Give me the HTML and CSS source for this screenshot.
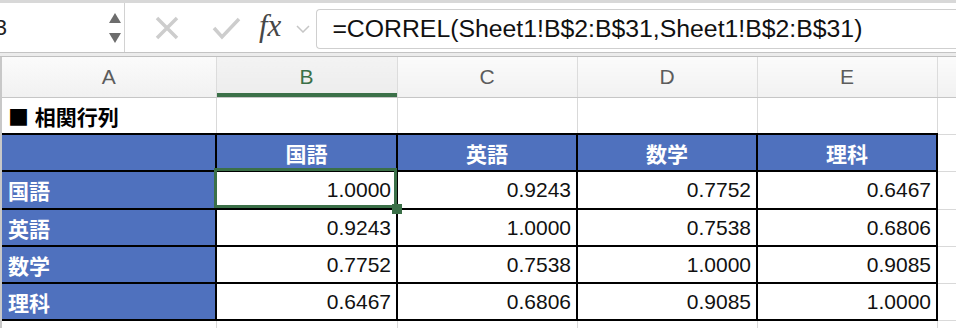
FILE: index.html
```html
<!DOCTYPE html>
<html lang="ja">
<head>
    <meta charset="UTF-8">
    <meta name="viewport" content="width=device-width, initial-scale=1.0">
    <title>相関行列</title>
    <link rel="stylesheet" href="styles.css">
</head>
<body>
    <div class="toolbar">
        <div class="namebox">
            <span class="namebox-text">B3</span>
            <div class="spinner">
                <span class="tri tri-up"></span>
                <span class="tri tri-down"></span>
            </div>
        </div>
        <div class="fbar-buttons">
            <svg class="icon-cancel" width="24" height="24" viewBox="0 0 24 24">
                <path d="M2 2 L22 22 M22 2 L2 22" />
            </svg>
            <svg class="icon-enter" width="29" height="23" viewBox="0 0 29 23">
                <path d="M2 11 L10 20 L27 2" />
            </svg>
            <span class="fx">fx</span>
            <svg class="icon-chev" width="14" height="8" viewBox="0 0 14 8">
                <path d="M1 1 L7 7 L13 1" />
            </svg>
        </div>
        <div class="formula">=CORREL(Sheet1!B$2:B$31,Sheet1!B$2:B$31)</div>
    </div>
    <div class="toolbar-edge"></div>

    <div class="sheet">
        <table class="grid">
            <colgroup>
                <col class="col-a">
                <col class="col-b">
                <col class="col-c">
                <col class="col-d">
                <col class="col-e">
                <col class="col-f">
            </colgroup>
            <tr class="colhead">
                <th>A</th>
                <th class="active">B</th>
                <th>C</th>
                <th>D</th>
                <th>E</th>
                <th></th>
            </tr>
            <tr>
                <td class="title"><span class="square">■</span> 相関行列</td>
                <td></td><td></td><td></td><td></td><td></td>
            </tr>
            <tr class="matrix-head">
                <td class="blue first"></td>
                <td class="blue">国語</td>
                <td class="blue">英語</td>
                <td class="blue">数学</td>
                <td class="blue">理科</td>
                <td></td>
            </tr>
            <tr class="matrix-row tall">
                <td class="blue first label">国語</td>
                <td class="num">1.0000</td>
                <td class="num">0.9243</td>
                <td class="num">0.7752</td>
                <td class="num">0.6467</td>
                <td></td>
            </tr>
            <tr class="matrix-row">
                <td class="blue first label">英語</td>
                <td class="num">0.9243</td>
                <td class="num">1.0000</td>
                <td class="num">0.7538</td>
                <td class="num">0.6806</td>
                <td></td>
            </tr>
            <tr class="matrix-row">
                <td class="blue first label">数学</td>
                <td class="num">0.7752</td>
                <td class="num">0.7538</td>
                <td class="num">1.0000</td>
                <td class="num">0.9085</td>
                <td></td>
            </tr>
            <tr class="matrix-row">
                <td class="blue first label">理科</td>
                <td class="num">0.6467</td>
                <td class="num">0.6806</td>
                <td class="num">0.9085</td>
                <td class="num">1.0000</td>
                <td></td>
            </tr>
            <tr>
                <td></td><td></td><td></td><td></td><td></td><td></td>
            </tr>
        </table>
        <div class="selection"><span class="handle"></span></div>
    </div>
</body>
</html>
```

FILE: styles.css
```css
body {
    margin: 0;
    width: 956px;
    height: 328px;
    overflow: hidden;
    background-color: #fff;
    font-family: "Liberation Sans", "Noto Sans CJK JP", sans-serif;
    color: #111;
}
.toolbar {
    display: flex;
    height: 49px;
    border-top: 3px solid #d8d8d8;
    border-bottom: 1px solid #c4c4c4;
    background-color: #fff;
}
.namebox {
    width: 124px;
    flex: none;
    display: flex;
    align-items: center;
    justify-content: space-between;
    border-right: 1px solid #d2d2d2;
    overflow: hidden;
}
.namebox-text {
    margin-left: -20px;
    font-size: 22px;
    color: #222;
}
.spinner {
    display: flex;
    flex-direction: column;
    gap: 10px;
    margin-right: 3px;
}
.tri {
    width: 0;
    height: 0;
    border-left: 6px solid transparent;
    border-right: 6px solid transparent;
}
.tri-up {
    border-bottom: 10px solid #6d6d6d;
}
.tri-down {
    border-top: 10px solid #6d6d6d;
}
.fbar-buttons {
    display: flex;
    align-items: center;
    flex: none;
}
.fbar-buttons svg {
    fill: none;
    stroke: #cdcdcd;
    stroke-width: 3.5;
}
.icon-cancel {
    margin-left: 30px;
}
.icon-enter {
    margin-left: 33px;
    margin-top: 2px;
}
.fx {
    margin-left: 18px;
    font-family: "Liberation Serif", serif;
    font-style: italic;
    font-size: 31px;
    color: #474747;
    margin-bottom: 4px;
}
.icon-chev {
    margin-left: 15px;
    margin-top: 3px;
}
.fbar-buttons .icon-chev {
    stroke-width: 1.5;
    stroke: #c6c6c6;
}
.formula {
    flex: 1;
    margin: 6px 0 3px 6px;
    border: 1px solid #cfcfcf;
    border-right: none;
    border-radius: 4px 0 0 4px;
    display: flex;
    align-items: center;
    padding-left: 15px;
    font-size: 24.8px;
    white-space: nowrap;
    overflow: hidden;
    color: #111;
}
.toolbar-edge {
    height: 3px;
    background-color: #ececec;
    border-bottom: 1px solid #c0c0c0;
}

.sheet {
    position: relative;
    border-left: 2px solid #c8c8c8;
}
.grid {
    border-collapse: collapse;
    table-layout: fixed;
    width: 995px;
}
.col-a { width: 214px; }
.col-b { width: 181px; }
.col-c { width: 180px; }
.col-d { width: 180px; }
.col-e { width: 180px; }
.col-f { width: 60px; }

.grid td {
    height: 35px;
    padding: 0 5px;
    border: 1px solid #d9d9d9;
    font-size: 21px;
    white-space: nowrap;
    overflow: hidden;
}
.grid tr td:first-child,
.grid tr th:first-child {
    border-left: hidden;
}
.colhead th {
    height: 40px;
    padding: 0;
    font-weight: normal;
    font-size: 21px;
    color: #5c5c5c;
    background: linear-gradient(#fbfbfb, #f1f1f1);
    border-left: 1px solid #dcdcdc;
    border-right: 1px solid #dcdcdc;
    border-top: none;
    border-bottom: 1px solid #c6c6c6;
}
.colhead th.active {
    color: #3b7048;
    background: linear-gradient(#f3f3f3, #ececec);
    box-shadow: inset 0 -4px 0 #3b7048;
}
.grid td.title {
    padding-left: 6px;
    font-weight: bold;
    color: #000;
}
.square {
    font-family: "Noto Sans CJK JP", sans-serif;
    font-weight: bold;
}
.matrix-head td,
.matrix-row td {
    border: 2px solid #000;
}
.matrix-head td:last-child,
.matrix-row td:last-child {
    border-right-color: #d9d9d9;
    border-top-color: #d9d9d9;
    border-bottom-color: #d9d9d9;
    border-width: 1px;
}
.grid td.blue {
    background-color: #4f71be;
    color: #fff;
    font-weight: bold;
    text-align: center;
}
.grid td.label {
    text-align: left;
    padding-left: 6px;
}
.grid tr.tall td {
    height: 36px;
}
.grid td.num {
    text-align: right;
    padding-right: 5px;
    color: #111;
}

.selection {
    position: absolute;
    left: 212px;
    top: 111px;
    width: 177px;
    height: 34px;
    border: 3px solid #3b7048;
}
.handle {
    position: absolute;
    right: -8px;
    bottom: -9px;
    width: 10px;
    height: 10px;
    background-color: #3b7048;
}
```
